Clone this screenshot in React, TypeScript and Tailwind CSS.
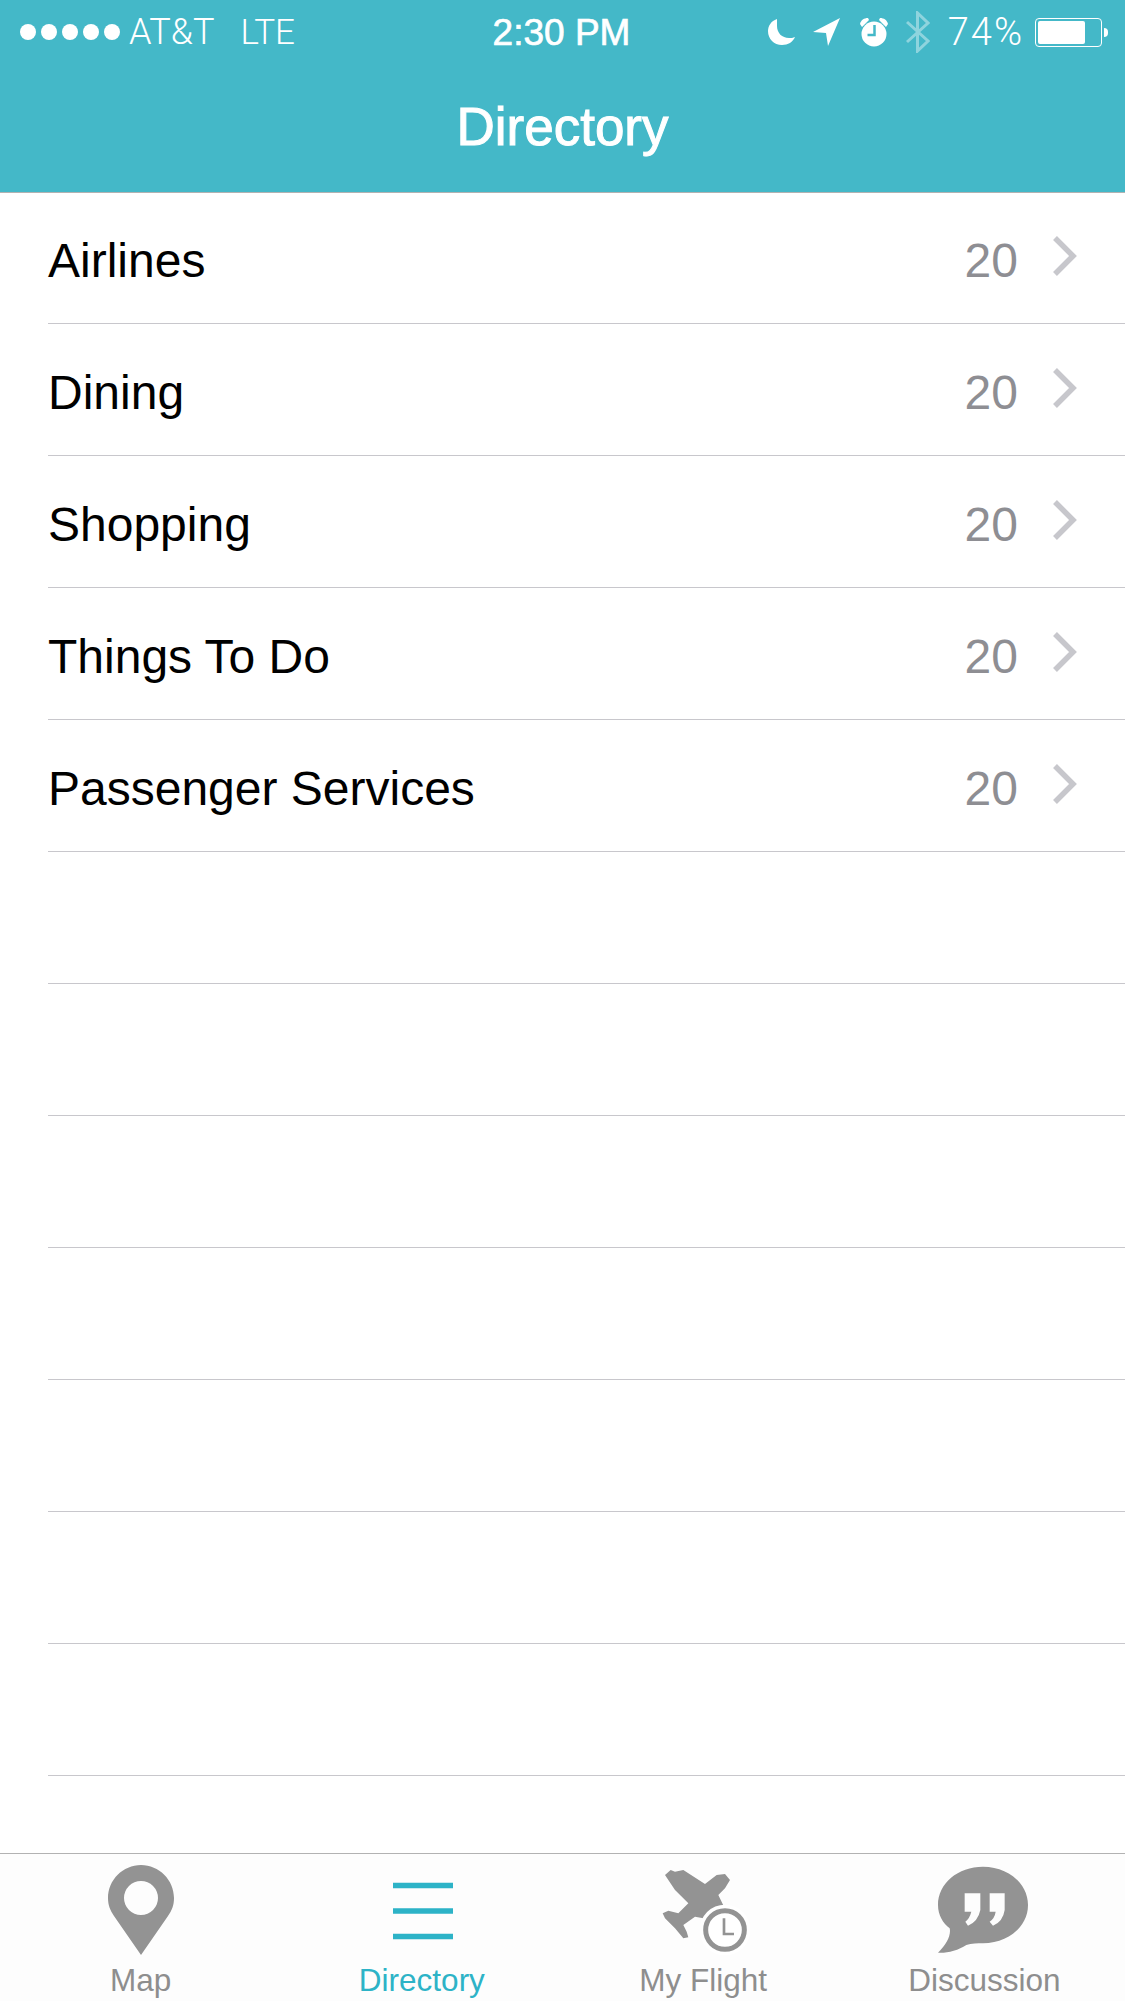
const rows: (string | null)[] = ["Airlines", "Dining", "Shopping", "Things To Do", "Passenger Services", null, null, null, null, null, null, null];

function Moon() {
  return (
    <svg width="28" height="28" viewBox="0 0 28 28" className="mr-[17px]">
      <path d="M9 1 C3 3 0 8 0 13 C0 21 6 27 14 27 C20 27 25 24 27 19 C25 20 23 20 21 20 C14 20 9 15 9 8 C9 6 9 3 9 1Z" fill="#fff" />
    </svg>
  );
}

function Arrow() {
  return (
    <svg width="27" height="28" viewBox="0 0 27 28" className="mr-[19px]">
      <path d="M0 14 L27 0 L15 28 L13 15Z" fill="#fff" />
    </svg>
  );
}

function Alarm() {
  return (
    <svg width="30" height="30" viewBox="0 0 30 30" className="mr-[17px]">
      <circle cx="15" cy="17" r="12.5" fill="#fff" />
      <path d="M1 7 C2 3 5 1 9 1 L10 3 L3 10Z M29 7 C28 3 25 1 21 1 L20 3 L27 10Z" fill="#fff" />
      <path d="M15.5 8 V18 H8.5" fill="none" stroke="#44b8c8" strokeWidth="2.5" />
    </svg>
  );
}

function Bluetooth() {
  return (
    <svg width="24" height="42" viewBox="0 0 24 42" className="mr-[18px]">
      <path d="M1 11 L22 30 L11.5 40 V2 L22 12 L1 31" fill="none" stroke="#fff" strokeOpacity="0.4" strokeWidth="3" />
    </svg>
  );
}

function Battery() {
  return (
    <div className="flex items-center">
      <div className="w-[67px] h-[29px] rounded-[4px] border border-white p-[2px]">
        <div className="w-[47px] h-full bg-white rounded-[2px]" />
      </div>
      <div className="w-[4px] h-[9px] ml-[2px] bg-white rounded-r-full" />
    </div>
  );
}

function Chevron() {
  return (
    <svg width="24" height="40" viewBox="0 0 24 40" className="mb-[4px]">
      <path d="M2 2 L20 20 L2 38" fill="none" stroke="#c7c7cc" strokeWidth="5.5" />
    </svg>
  );
}

function PinIcon() {
  return (
    <svg width="110" height="100" viewBox="0 0 110 100" className="blur-[0.4px]">
      <path
        fillRule="evenodd"
        d="M55 5 C37 5 22 20 22 38 C22 45 24 50 28 56 L55 95 L82 56 C86 50 88 45 88 38 C88 20 73 5 55 5Z M55 21 A17 17 0 1 0 55 55 A17 17 0 1 0 55 21Z"
        fill="#939393"
      />
    </svg>
  );
}

function MenuIcon() {
  return (
    <svg width="110" height="100" viewBox="0 0 110 100" className="blur-[0.5px]">
      <path d="M26 25.500 H86 M26 51 H86 M26 76.500 H86" stroke="#2db3c7" strokeWidth="5.500" fill="none" />
    </svg>
  );
}

function PlaneIcon() {
  return (
    <svg width="110" height="100" viewBox="-6 0 330 300" className="blur-[0.5px]">
      <path
        d="M45 45 L62 30 L75 35 L100 30 L165 72 L200 45 L225 42 L240 60 L225 85 L205 105 L222 140 L190 150 L160 175 L135 170 L100 195 L110 215 L115 232 L100 235 L75 205 L45 175 L38 160 L55 152 L85 160 L115 130 L75 90 Z"
        fill="#939393"
      />
      <circle cx="225" cy="210" r="76" fill="#fff" />
      <circle cx="225" cy="210" r="58" fill="none" stroke="#939393" strokeWidth="15" />
      <path d="M222 175 V222 H252" fill="none" stroke="#939393" strokeWidth="8" />
    </svg>
  );
}

function BubbleIcon() {
  return (
    <svg width="110" height="100" viewBox="13 0 330 300" className="blur-[0.5px]">
      <path
        fillRule="evenodd"
        d="M175 20 C100 20 40 70 40 135 C40 165 55 190 75 205 C80 225 65 255 40 278 C65 280 100 272 125 255 C140 250 160 250 175 250 C250 250 310 200 310 135 C310 70 250 20 175 20Z M120 100 H167 V150 Q160 185 130 197 L122 185 Q135 175 140 155 H120Z M195 100 H240 V150 Q235 185 205 197 L195 185 Q210 175 213 155 H195Z"
        fill="#939393"
      />
    </svg>
  );
}

function Tab({ icon, label, active }: { icon: React.ReactNode; label: string; active?: boolean }) {
  return (
    <div className="flex flex-col items-center pt-[6px]">
      {icon}
      <span className={`mt-[2px] text-[31.5px] leading-[36px] ${active ? "text-[#2db3c7]" : "text-[#8e8e8e]"}`}>{label}</span>
    </div>
  );
}

export default function App() {
  return (
    <div className="w-[1125px] h-[2001px] bg-white flex flex-col overflow-hidden font-['Liberation_Sans',sans-serif]">
      <header className="h-[193px] shrink-0 bg-[#44b8c8] border-b border-[#b2b2b2] text-white flex flex-col">
        <div className="h-[60px] pt-[4px] pl-[20px] pr-[17px] grid grid-cols-[1fr_auto_1fr] items-center">
          <div className="flex items-center">
            <div className="flex gap-[5px] mr-[9px]">
              {[0, 1, 2, 3, 4].map((i) => (
                <span key={i} className="w-[16px] h-[16px] rounded-full bg-white" />
              ))}
            </div>
            <span className="font-['Roboto',sans-serif] font-light text-[36px] leading-none">AT&amp;T</span>
            <span className="font-['Roboto',sans-serif] font-light text-[35px] leading-none ml-[26px]">LTE</span>
          </div>
          <span className="pr-[5px] text-[37px] leading-none [-webkit-text-stroke:0.7px_#fff]">2:30 PM</span>
          <div className="flex items-center justify-end">
            <Moon />
            <Arrow />
            <Alarm />
            <Bluetooth />
            <span className="font-['Roboto',sans-serif] font-light text-[38px] leading-none tracking-[2px] mr-[11px]">74%</span>
            <Battery />
          </div>
        </div>
        <div className="flex-1 flex items-center justify-center">
          <h1 className="text-[53px] leading-none [-webkit-text-stroke:1px_#fff]">Directory</h1>
        </div>
      </header>
      <main className="flex-1 min-h-0">
        {rows.map((label, i) => (
          <div key={i} className="h-[132px] first:h-[131px] pl-[48px]">
            <div className="h-full pr-[48px] border-b border-[#c8c7cc] flex items-center">
              {label && (
                <>
                  <span className="flex-1 pt-[6px] text-[48px] text-black">{label}</span>
                  <span className="pt-[6px] text-[48px] text-[#8e8e93] mr-[35px]">20</span>
                  <Chevron />
                </>
              )}
            </div>
          </div>
        ))}
      </main>
      <nav className="h-[148px] shrink-0 bg-[#fdfdfd] border-t border-[#b2b2b2] grid grid-cols-4">
        <Tab icon={<PinIcon />} label="Map" />
        <Tab icon={<MenuIcon />} label="Directory" active />
        <Tab icon={<PlaneIcon />} label="My Flight" />
        <Tab icon={<BubbleIcon />} label="Discussion" />
      </nav>
    </div>
  );
}
